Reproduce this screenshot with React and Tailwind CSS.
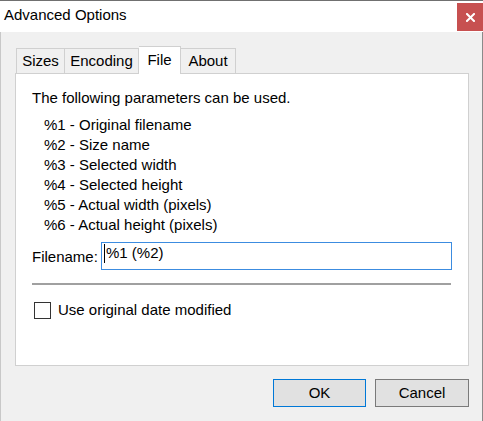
import React from "react";

export default function App() {
  const font = { fontFamily: '"Liberation Sans", Arial, sans-serif' };
  const params = [
    "%1 - Original filename",
    "%2 - Size name",
    "%3 - Selected width",
    "%4 - Selected height",
    "%5 - Actual width (pixels)",
    "%6 - Actual height (pixels)",
  ];
  return (
    <div
      className="w-[483px] h-[421px] flex flex-col bg-[#f0f0f0] border-t border-[#707070] text-[15px] text-black overflow-hidden"
      style={font}
    >
      {/* Title bar */}
      <div className="h-[31px] bg-white flex items-start shrink-0">
        <div className="pl-[4px] pt-[4px] leading-[20px] flex-1">Advanced Options</div>
        <div className="w-[26px] h-[28px] mt-[2px] bg-[#c75050] flex items-center justify-center">
          <svg width="9" height="9" viewBox="0 0 9 9">
            <path d="M1 1 L8 8 M8 1 L1 8" stroke="white" strokeWidth="2" strokeLinecap="square" />
          </svg>
        </div>
      </div>

      {/* Body */}
      <div className="flex-1 flex flex-col border-r border-l border-[#8a8a8a] border-l-[#c8c8c8] pl-[14px] pt-[14px]">
        {/* Tabs */}
        <div className="flex items-end h-[27px] pl-[1px] relative z-10">
          <div className="h-[25px] w-[49px] border border-b-0 border-[#d0d0d0] flex items-center justify-center leading-[20px]">
            Sizes
          </div>
          <div className="h-[25px] w-[74px] border border-b-0 border-l-0 border-[#d0d0d0] flex items-center justify-center leading-[20px]">
            Encoding
          </div>
          <div className="h-[28px] w-[42px] -mb-[1px] bg-white border border-b-0 border-l-0 border-[#d0d0d0] flex items-start pt-[3px] justify-center leading-[20px]">
            File
          </div>
          <div className="h-[25px] w-[55px] border border-b-0 border-l-0 border-[#d0d0d0] flex items-center justify-center leading-[20px]">
            About
          </div>
        </div>

        {/* Panel */}
        <div className="w-[454px] h-[293px] bg-white border border-[#d0d0d0] pl-[16px] pr-[16px] pt-[14px] flex flex-col">
          <div className="leading-[20px]">The following parameters can be used.</div>
          <div className="mt-[7px] pl-[12px] flex flex-col">
            {params.map((p) => (
              <div key={p} className="leading-[20px]">
                {p}
              </div>
            ))}
          </div>
          <div className="mt-[7px] flex items-center">
            <div className="w-[69px] leading-[20px] pt-[1px]">Filename:</div>
            <div className="w-[351px] h-[28px] border border-[#3c8ce0] flex items-start pl-[2px] leading-[20px]">
              <span className="w-[1px] h-[19px] bg-black mt-[1px]" />
              <span className="pl-[1px]">%1 (%2)</span>
            </div>
          </div>
          <div className="mt-[13px] h-[2px] w-[419px] bg-[#a0a0a0]" />
          <div className="mt-[15px] flex items-center">
            <div className="ml-[2px] w-[17px] h-[17px] border border-[#333333] bg-white" />
            <div className="ml-[7px] leading-[20px]">Use original date modified</div>
          </div>
        </div>

        {/* Buttons */}
        <div className="flex justify-end gap-[9px] pr-[13px] mt-[13px]">
          <div className="w-[93px] h-[28px] bg-[#e1e1e1] border border-[#0078d7] flex items-center justify-center leading-[20px]">
            OK
          </div>
          <div className="w-[94px] h-[28px] bg-[#e1e1e1] border border-[#7a7a7a] flex items-center justify-center leading-[20px]">
            Cancel
          </div>
        </div>
      </div>
    </div>
  );
}
